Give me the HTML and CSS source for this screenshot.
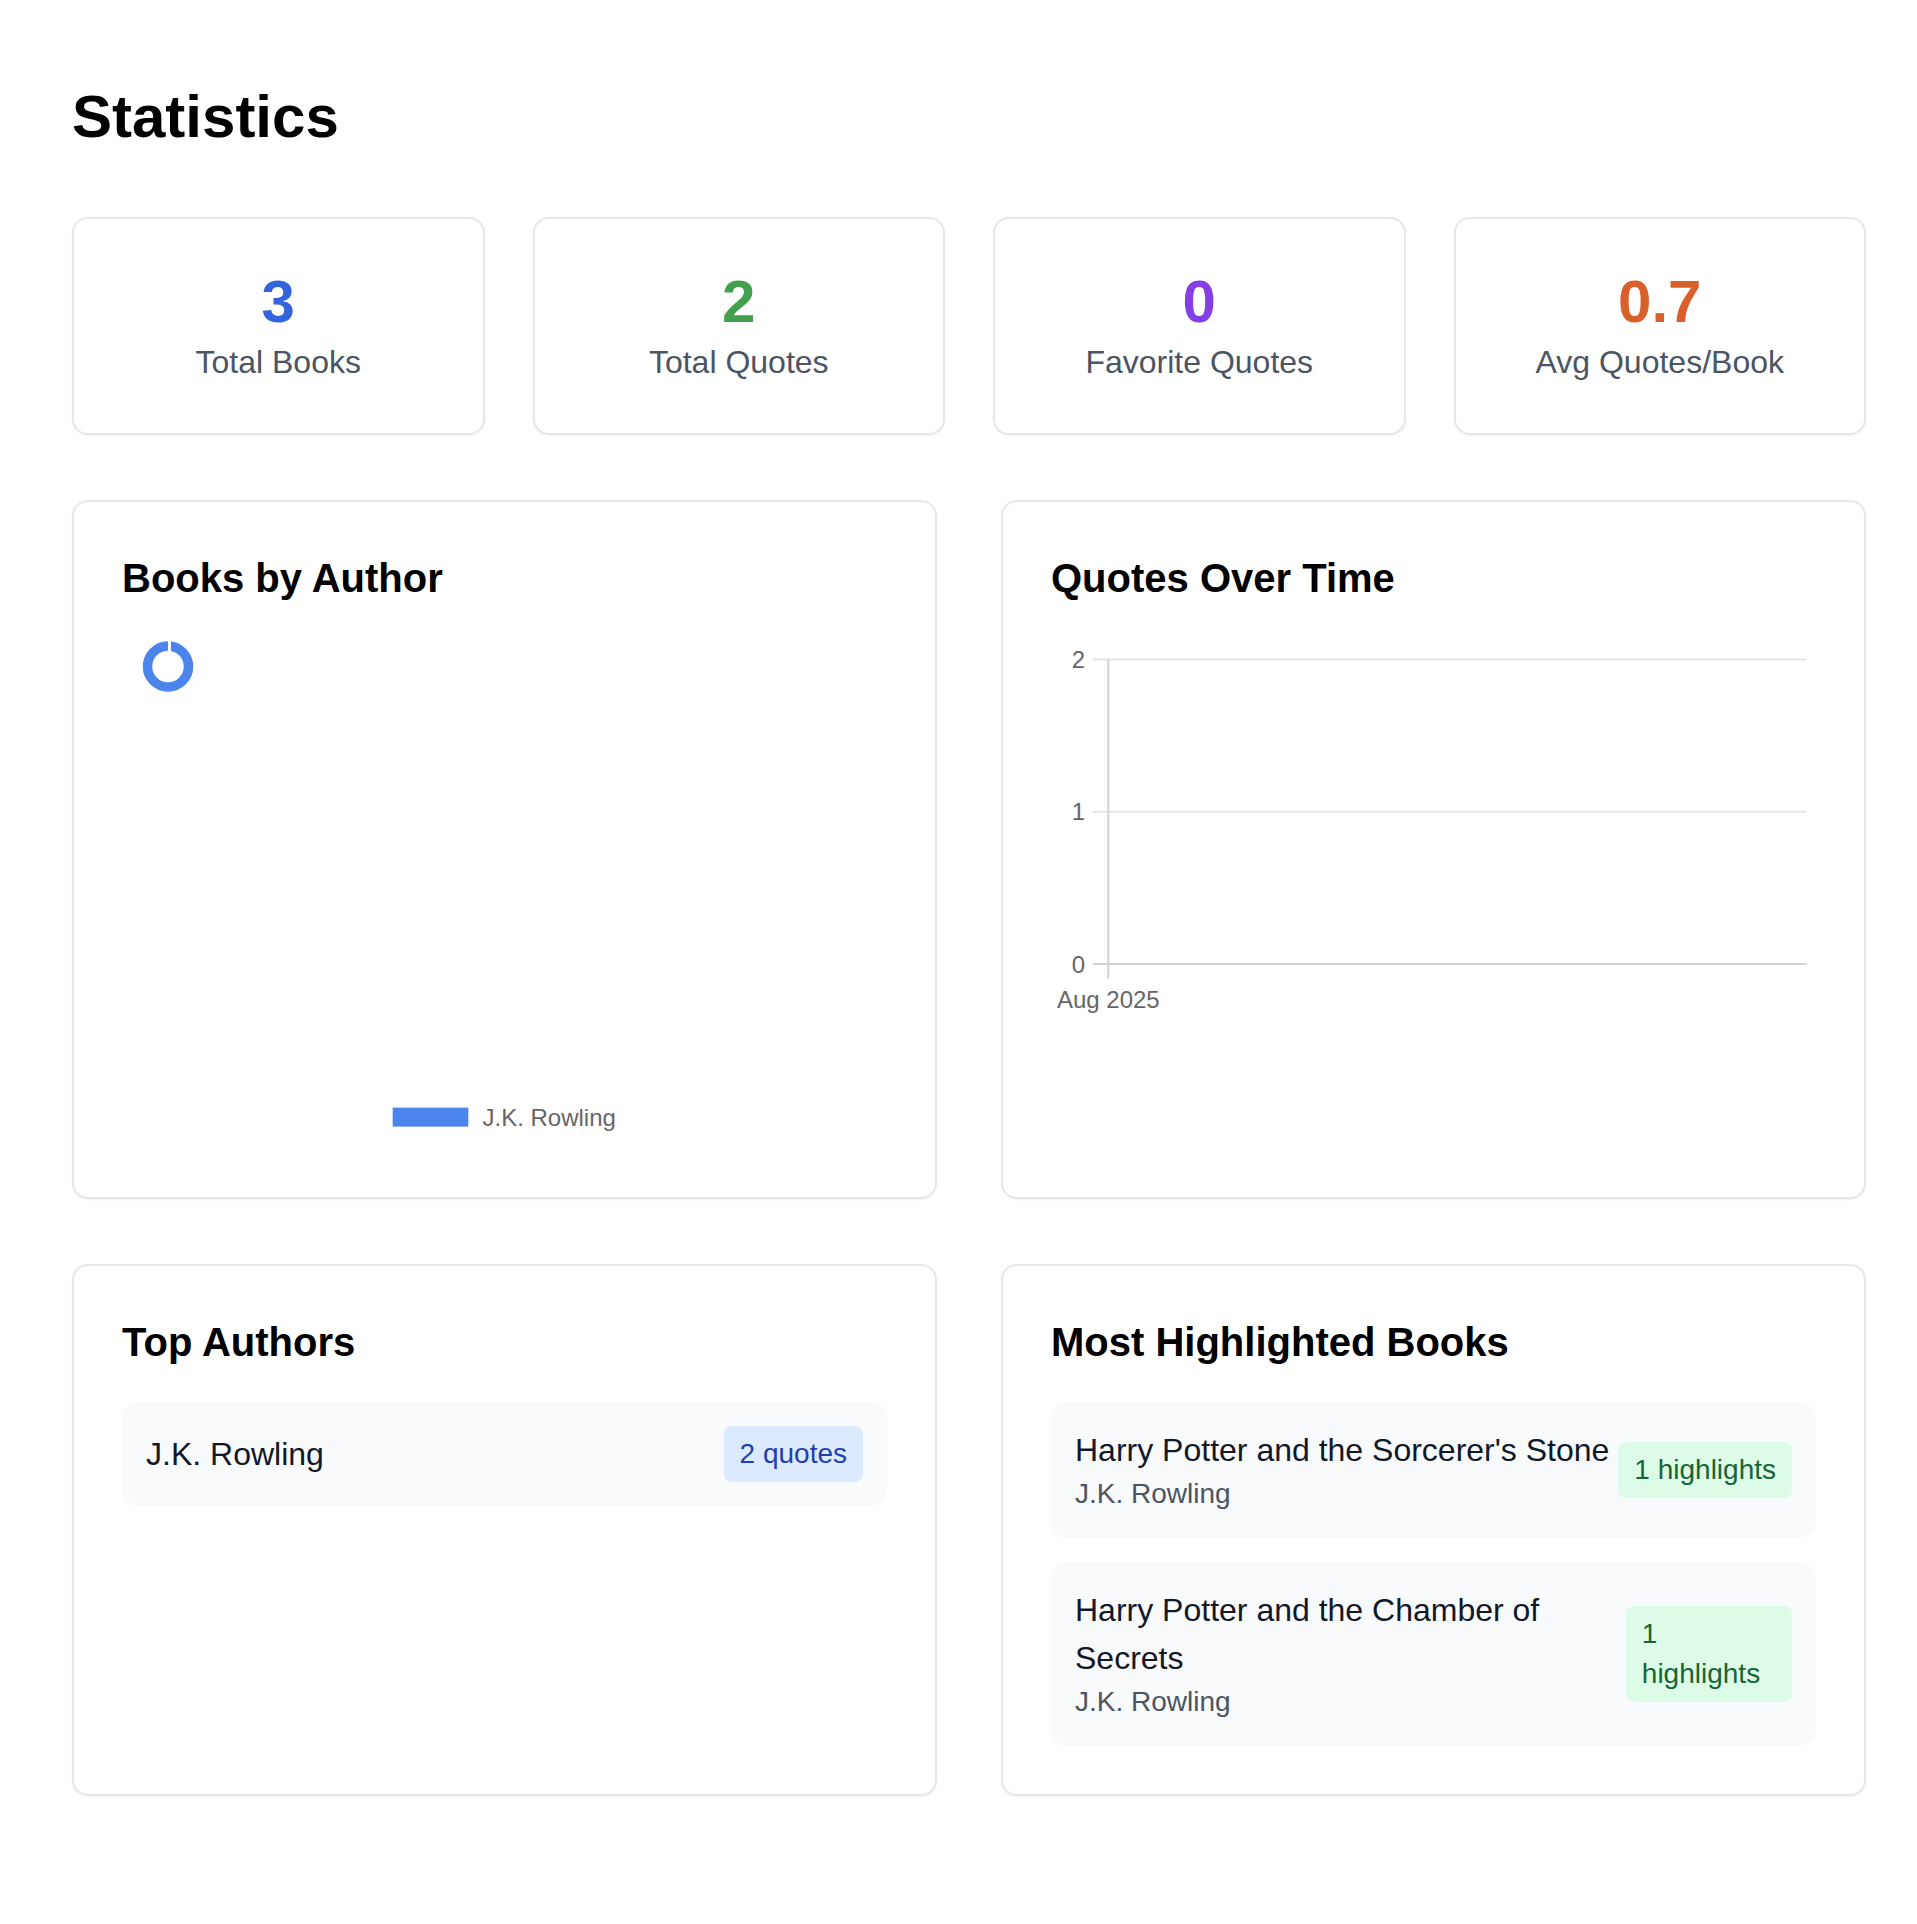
FILE: index.html
```html
<!DOCTYPE html>
<html lang="en">
<head>
<meta charset="utf-8">
<title>Statistics</title>
<link rel="stylesheet" href="styles.css">
</head>
<body>
<div class="page">
  <h1 class="page-title">Statistics</h1>

  <div class="stats-grid">
    <div class="stat-card">
      <div class="stat-value blue">3</div>
      <div class="stat-label">Total Books</div>
    </div>
    <div class="stat-card">
      <div class="stat-value green">2</div>
      <div class="stat-label">Total Quotes</div>
    </div>
    <div class="stat-card">
      <div class="stat-value purple">0</div>
      <div class="stat-label">Favorite Quotes</div>
    </div>
    <div class="stat-card">
      <div class="stat-value orange">0.7</div>
      <div class="stat-label">Avg Quotes/Book</div>
    </div>
  </div>

  <div class="two-grid">
    <div class="panel">
      <h2 class="panel-title">Books by Author</h2>
      <div class="chart-area">
        <svg class="chart-svg" width="763" height="512" viewBox="0 0 763 512">
          <circle cx="46" cy="28.5" r="20.5" fill="none" stroke="#4b84eb" stroke-width="9.5"/>
          <line x1="47.5" y1="2" x2="47.5" y2="14" stroke="#ffffff" stroke-width="3"/>
          <rect x="270.7" y="469.6" width="75.6" height="19" fill="#4b84eb"/>
          <text class="chart-text" x="360.5" y="487.7">J.K. Rowling</text>
        </svg>
      </div>
    </div>
    <div class="panel">
      <h2 class="panel-title">Quotes Over Time</h2>
      <div class="chart-area">
        <svg class="chart-svg" width="763" height="512" viewBox="0 0 763 512">
          <line x1="41.7" y1="21.5" x2="755.6" y2="21.5" stroke="#e5e5e5" stroke-width="2"/>
          <line x1="41.7" y1="173.7" x2="755.6" y2="173.7" stroke="#e5e5e5" stroke-width="2"/>
          <line x1="41.7" y1="325.9" x2="755.6" y2="325.9" stroke="#d2d2d2" stroke-width="2"/>
          <line x1="57.3" y1="21.5" x2="57.3" y2="340.4" stroke="#d2d2d2" stroke-width="2"/>
          <text class="chart-text" x="34" y="30.1" text-anchor="end">2</text>
          <text class="chart-text" x="34" y="182.3" text-anchor="end">1</text>
          <text class="chart-text" x="34" y="334.5" text-anchor="end">0</text>
          <text class="chart-text" x="57.3" y="369.7" text-anchor="middle">Aug 2025</text>
        </svg>
      </div>
    </div>
  </div>

  <div class="two-grid last">
    <div class="panel">
      <h2 class="panel-title">Top Authors</h2>
      <div class="list">
        <div class="list-row">
          <span class="author-name">J.K. Rowling</span>
          <span class="badge badge-blue">2 quotes</span>
        </div>
      </div>
    </div>
    <div class="panel">
      <h2 class="panel-title">Most Highlighted Books</h2>
      <div class="list">
        <div class="list-row">
          <div class="book-info">
            <div class="book-title">Harry Potter and the Sorcerer's Stone</div>
            <div class="book-author">J.K. Rowling</div>
          </div>
          <span class="badge badge-green">1 highlights</span>
        </div>
        <div class="list-row">
          <div class="book-info">
            <div class="book-title">Harry Potter and the Chamber of Secrets</div>
            <div class="book-author">J.K. Rowling</div>
          </div>
          <span class="badge badge-green">1 highlights</span>
        </div>
      </div>
    </div>
  </div>
</div>
</body>
</html>
```

FILE: styles.css
```css
* {
  box-sizing: border-box;
}

body {
  margin: 0;
  background: #ffffff;
  font-family: "Liberation Sans", Arial, Helvetica, sans-serif;
  color: #111827;
}

.page {
  padding: 81px 51px 96px 72px;
}

.page-title {
  margin: 0 0 64px 0;
  font-size: 60px;
  line-height: 72px;
  font-weight: 700;
  color: #000000;
}

.stats-grid {
  display: grid;
  grid-template-columns: repeat(4, 1fr);
  gap: 48px;
  margin-bottom: 65px;
}

.stat-card {
  border: 2px solid #e5e7eb;
  border-radius: 16px;
  padding: 47px 48px;
  text-align: center;
  background: #ffffff;
  box-shadow: 0 1px 3px rgba(0, 0, 0, 0.05);
}

.stat-value {
  font-size: 60px;
  line-height: 72px;
  font-weight: 700;
}

.stat-value.blue { color: #3464dc; }
.stat-value.green { color: #43a04f; }
.stat-value.purple { color: #8440e4; }
.stat-value.orange { color: #da602b; }

.stat-label {
  font-size: 32px;
  line-height: 48px;
  color: #4b5563;
}

.two-grid {
  display: grid;
  grid-template-columns: 1fr 1fr;
  gap: 64px;
  margin-bottom: 65px;
}

.two-grid.last {
  margin-bottom: 0;
}

.panel {
  border: 2px solid #e5e7eb;
  border-radius: 16px;
  padding: 48px;
  background: #ffffff;
  box-shadow: 0 1px 3px rgba(0, 0, 0, 0.05);
}

.panel-title {
  margin: 0 0 32px 0;
  font-size: 40px;
  line-height: 56px;
  font-weight: 700;
  color: #000000;
}

.chart-area {
  height: 511px;
}

.chart-svg {
  display: block;
  overflow: visible;
}

.chart-text {
  font-family: "Liberation Sans", Arial, Helvetica, sans-serif;
  font-size: 24px;
  fill: #666666;
}

.list {
  display: flex;
  flex-direction: column;
  gap: 24px;
}

.list-row {
  display: flex;
  justify-content: space-between;
  align-items: center;
  padding: 24px;
  background: #f9fafb;
  border-radius: 16px;
}

.author-name {
  font-size: 32px;
  line-height: 48px;
  color: #111827;
}

.book-title {
  font-size: 32px;
  line-height: 48px;
  color: #111827;
}

.book-author {
  font-size: 28px;
  line-height: 40px;
  color: #4b5563;
}

.badge {
  font-size: 28px;
  line-height: 40px;
  padding: 8px 16px;
  border-radius: 8px;
}

.badge-blue {
  background: #dbeafe;
  color: #1e40af;
}

.badge-green {
  background: #dcfce7;
  color: #166534;
}
```
